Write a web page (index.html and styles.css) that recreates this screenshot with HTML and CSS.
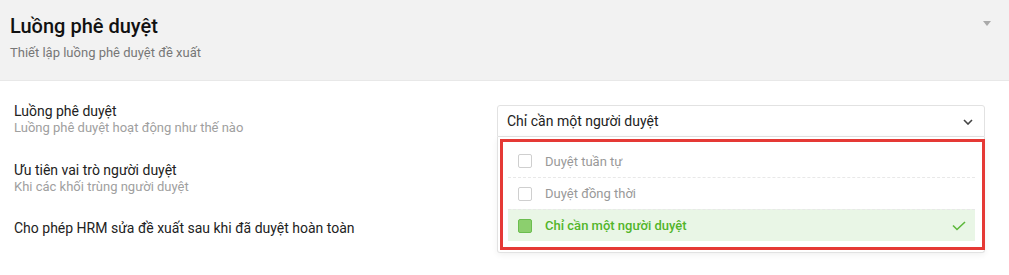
FILE: index.html
```html
<!DOCTYPE html>
<html lang="vi">
<head>
<meta charset="utf-8">
<title>Luồng phê duyệt</title>
<link rel="stylesheet" href="styles.css">
</head>
<body>
<section class="panel-card">
  <header class="card-header">
    <div class="card-titles">
      <h1 class="card-title">Luồng phê duyệt</h1>
      <p class="card-subtitle">Thiết lập luồng phê duyệt đề xuất</p>
    </div>
    <span class="collapse-caret"></span>
  </header>
  <div class="settings">
    <div class="setting-row">
      <div class="setting-label">
        <div class="label-main">Luồng phê duyệt</div>
        <div class="label-sub">Luồng phê duyệt hoạt động như thế nào</div>
      </div>
      <div class="select-wrap">
        <div class="select-box">
          <span class="select-value">Chỉ cần một người duyệt</span>
          <svg class="chevron" width="10" height="6" viewBox="0 0 10 6"><path d="M1 1 L5 5 L9 1" fill="none" stroke="#444" stroke-width="1.6"/></svg>
        </div>
        <div class="dropdown">
          <div class="option">
            <span class="checkbox"></span>
            <span class="option-text">Duyệt tuần tự</span>
          </div>
          <div class="option">
            <span class="checkbox"></span>
            <span class="option-text">Duyệt đồng thời</span>
          </div>
          <div class="option selected">
            <span class="checkbox"></span>
            <span class="option-text">Chỉ cần một người duyệt</span>
            <svg class="check" width="14" height="10" viewBox="0 0 14 10"><path d="M1 4.5 L5 8.5 L13 1" fill="none" stroke="#5cb83a" stroke-width="1.6"/></svg>
          </div>
          <div class="highlight-frame"></div>
        </div>
      </div>
    </div>
    <div class="setting-row">
      <div class="setting-label">
        <div class="label-main">Ưu tiên vai trò người duyệt</div>
        <div class="label-sub">Khi các khối trùng người duyệt</div>
      </div>
    </div>
    <div class="setting-row">
      <div class="setting-label">
        <div class="label-main">Cho phép HRM sửa đề xuất sau khi đã duyệt hoàn toàn</div>
      </div>
    </div>
  </div>
</section>
</body>
</html>
```
FILE: styles.css
```css
* { box-sizing: border-box; }
html, body { min-height: 275px; }
body {
  margin: 0;
  background: #fff;
  font-family: Roboto, "Noto Sans", Arial, sans-serif;
  color: #222;
}
.panel-card { min-height: 275px; }
.card-header {
  height: 81px;
  background: #f2f2f2;
  border-bottom: 1px solid #e8e8e8;
  padding: 14px 18px 0 10px;
  display: flex;
  justify-content: space-between;
  align-items: flex-start;
}
.card-title {
  margin: 0;
  font-size: 20px;
  line-height: 24px;
  font-weight: 500;
  color: #111;
}
.card-subtitle {
  margin: 6px 0 0;
  font-size: 13px;
  line-height: 18px;
  color: #777;
}
.collapse-caret {
  margin-top: 7px;
  width: 0;
  height: 0;
  border-left: 4.5px solid transparent;
  border-right: 4.5px solid transparent;
  border-top: 5px solid #aaa;
}
.settings {
  padding: 22px 24px 0 14px;
  display: flex;
  flex-direction: column;
  gap: 25px;
}
.setting-row {
  display: flex;
  justify-content: space-between;
  align-items: flex-start;
}
.label-main {
  font-size: 14px;
  line-height: 17px;
  color: #222;
}
.label-sub {
  font-size: 13px;
  line-height: 16px;
  color: #a0a0a0;
}
.select-wrap {
  position: relative;
  width: 488px;
  margin-top: 2px;
}
.select-box {
  height: 32px;
  border: 1px solid #e2e2e2;
  border-radius: 3px 3px 0 0;
  padding: 0 11px 0 9px;
  display: flex;
  align-items: center;
  justify-content: space-between;
  font-size: 14px;
  color: #222;
  background: #fff;
}
.chevron { margin-top: 1px; }
.dropdown {
  position: absolute;
  top: 32px;
  left: 0;
  right: 0;
  height: 116px;
  background: #fff;
  border: 1px solid #e2e2e2;
  border-top: none;
  border-radius: 0 0 3px 3px;
  box-shadow: 0 2px 6px rgba(0,0,0,0.06);
  padding: 8px 9px 0 10px;
}
.option {
  height: 32px;
  display: flex;
  align-items: center;
  padding: 0 9px 0 10px;
  font-size: 13px;
  color: #999;
}
.option + .option { border-top: 1px dashed #e8e8e8; }
.checkbox {
  width: 14px;
  height: 14px;
  border: 1px solid #cfcfcf;
  border-radius: 2px;
  background: #fff;
  margin-right: 13px;
  flex: none;
}
.option-text { flex: 1; }
.option.selected {
  background: #e9f6e6;
  color: #52b52a;
  font-weight: 500;
}
.option.selected .checkbox {
  background: #8ccf6e;
  border-color: #6bbd4f;
}
.highlight-frame {
  position: absolute;
  left: 2px;
  top: 2px;
  width: 485px;
  height: 111px;
  border: 3px solid #e53935;
  pointer-events: none;
}
```
